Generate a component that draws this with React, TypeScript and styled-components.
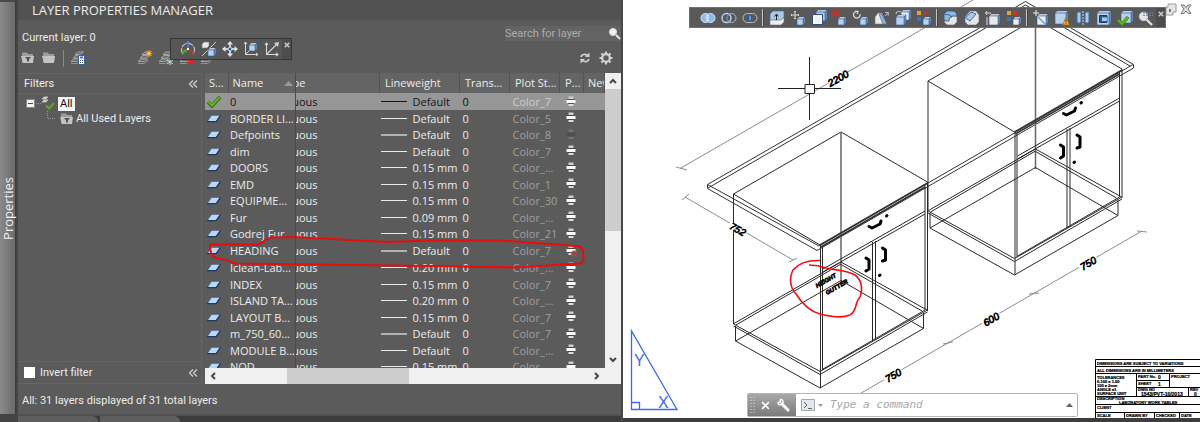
import React from "react";
import styled, { createGlobalStyle, css } from "styled-components";

const Global = createGlobalStyle`
  * { box-sizing: border-box; }
  html, body { margin: 0; padding: 0; }
  body {
    font-family: Roboto, "Open Sans", sans-serif;
    font-size: 11px;
    line-height: 16px;
    color: #ececec;
    background: #5b5b5b;
  }
  button, input { font: inherit; color: inherit; }
`;

const Workspace = styled.div`
  display: grid;
  grid-template-columns: 18px minmax(0, 605fr) minmax(0, 577fr);
  height: 100vh;
  min-height: 300px;
`;

/* ---------- docked side tab ---------- */

const SideRail = styled.aside`
  display: flex;
  flex-direction: column;
  background: #444;
  padding-bottom: 8px;
`;

const SideTab = styled.button`
  flex: 1;
  width: 16px;
  padding: 0;
  border: 0;
  border-top: 2px solid #4a4a4a;
  border-right: 1px solid #3c3c3c;
  background: linear-gradient(90deg, #8a8a8a, #6a6a6a);
  display: flex;
  align-items: center;
  justify-content: center;
  font-family: "Open Sans", sans-serif;
  font-size: 13px;
  line-height: 14px;
  color: #f2f2f2;
  span { writing-mode: vertical-rl; transform: rotate(180deg); }
`;

/* ---------- palette ---------- */

const Palette = styled.section`
  display: flex;
  flex-direction: column;
  min-width: 0;
  min-height: 0;
  background: #5b5b5b;
  border-right: 2px solid #484848;
  position: relative;
`;

const PaletteTitle = styled.h1`
  margin: 0;
  height: 20px;
  padding-left: 6px;
  display: flex;
  align-items: center;
  gap: 4px;
  background: #525252;
  font-family: "Open Sans", sans-serif;
  font-size: 13px;
  line-height: 20px;
  font-weight: 400;
`;

const Grip = styled.span<{ $h: number }>`
  width: 4px;
  height: ${(p) => p.$h}px;
  background-image: radial-gradient(#222 40%, transparent 45%);
  background-size: 2px 2px;
`;

const TopRow = styled.div`
  display: flex;
  justify-content: space-between;
  align-items: flex-start;
  padding: 6px 0 0 4px;
  height: 28px;
`;

const Current = styled.span`
  padding-top: 4px;
`;

const SearchBox = styled.label`
  display: flex;
  align-items: center;
  width: 116px;
  height: 15px;
  background: #636363;
  input {
    flex: 1;
    min-width: 0;
    border: 0;
    padding: 0;
    height: 15px;
    background: transparent;
    outline: 0;
  }
  input::placeholder { color: #adadad; opacity: 1; }
`;

const ToolRow = styled.div`
  display: flex;
  align-items: center;
  height: 20px;
  margin-bottom: 5px;
  padding: 0 7px 0 2px;
  gap: 5px;
`;

const IconButton = styled.button`
  width: 16px;
  height: 16px;
  padding: 0;
  border: 0;
  background: transparent;
  display: flex;
  svg { display: block; }
`;

const Spacer = styled.span<{ $w?: number }>`
  ${(p) => (p.$w ? css`width: ${p.$w}px;` : css`flex: 1;`)}
`;

const ThinRule = styled.span`
  width: 1px;
  height: 17px;
  margin: 0 1px;
  background: #8a8a8a;
`;

const Main = styled.div`
  flex: 1;
  min-height: 0;
  display: grid;
  grid-template-columns: 184px minmax(0, 1fr);
  grid-template-rows: minmax(0, 1fr);
  gap: 3px;
`;

const Filters = styled.div`
  display: flex;
  flex-direction: column;
  border: 1px solid #656565;
  border-left: 0;
  min-height: 0;
`;

const FilterBar = styled.div<{ $foot?: boolean }>`
  display: flex;
  align-items: center;
  justify-content: space-between;
  height: ${(p) => (p.$foot ? 22 : 20)}px;
  padding: 0 3px 0 6px;
  border-${(p) => (p.$foot ? "top" : "bottom")}: 1px solid #656565;
`;

const CheckLabel = styled.label`
  display: flex;
  align-items: center;
  gap: 5px;
  input {
    appearance: none;
    width: 11px;
    height: 11px;
    margin: 0;
    background: #fff;
  }
`;

const Tree = styled.ul`
  flex: 1;
  margin: 0;
  padding: 2px 0 0 7px;
  list-style: none;
`;

const TreeItem = styled.li<{ $child?: boolean }>`
  display: flex;
  align-items: center;
  height: 15px;
  gap: ${(p) => (p.$child ? 3 : 1)}px;
  padding-left: ${(p) => (p.$child ? 19 : 0)}px;
`;

const Picked = styled.span`
  background: #f4f4f4;
  color: #111;
  line-height: 14px;
  padding: 0 2px;
`;

const ListPane = styled.div`
  position: relative;
  display: grid;
  grid-template-columns: minmax(0, 1fr) 16px;
  grid-template-rows: minmax(0, 1fr) 16px;
  min-height: 0;
`;

const TableClip = styled.div`
  overflow: hidden;
  min-height: 0;
`;

const Table = styled.table`
  width: 100%;
  table-layout: fixed;
  border-collapse: collapse;
  font-family: "Open Sans", "Noto Sans", sans-serif;
  th, td {
    padding: 0;
    text-align: left;
    font-weight: 400;
    white-space: nowrap;
    overflow: hidden;
  }
  th {
    height: 20px;
    background: #646464;
    border-right: 1px solid #535353;
    padding-left: 5px;
  }
  th:first-child { padding-left: 4px; }
  th:nth-child(2) { padding-left: 4px; }
  th:nth-child(3), td:nth-child(3) { padding-left: 0; }
  th:nth-child(8) { padding-left: 4px; }
  td:nth-child(2), th:nth-child(2) { border-right: 1px solid #4a4a4a; }
  td:nth-child(2) { padding-left: 2px; }
  td:nth-child(5), td:nth-child(6) { padding-left: 3px; }
`;

const Row = styled.tr<{ $on: boolean }>`
  height: 17px;
  line-height: 15px;
  &:nth-child(even) { height: 16px; }
  &:nth-child(10) { height: 17px; }
  ${(p) => p.$on && css`
    background: #969696;
    color: #141414;
  `}
  td:nth-child(6) { color: ${(p) => (p.$on ? "#cfcfcf" : "#a0a0a0")}; }
`;

const NameHead = styled.span`
  display: flex;
  align-items: center;
  justify-content: space-between;
  padding-right: 2px;
`;

const TailClip = styled.span<{ $w: number }>`
  display: flex;
  justify-content: flex-end;
  width: ${(p) => p.$w}px;
  overflow: hidden;
`;

const Weight = styled.span<{ $thick: boolean }>`
  display: flex;
  align-items: center;
  gap: 6px;
  padding-left: 1px;
  &::before {
    content: "";
    width: 26px;
    border-top: ${(p) => (p.$thick ? 2 : 1)}px solid currentColor;
    opacity: ${(p) => (p.$thick ? 0.6 : 1)};
  }
`;

const CellIcon = styled.span<{ $indent: number }>`
  display: flex;
  padding-left: ${(p) => p.$indent}px;
`;

const VBar = styled.div`
  background: #f0f0f0;
  display: flex;
  flex-direction: column;
`;

const HBar = styled.div`
  grid-column: 1 / -1;
  background: #f0f0f0;
  display: flex;
`;

const ScrollButton = styled.button`
  flex: 0 0 16px;
  height: 16px;
  padding: 0;
  border: 0;
  background: transparent;
  display: flex;
  align-items: center;
  justify-content: center;
`;

const Thumb = styled.span<{ $size: number }>`
  flex: 0 0 ${(p) => p.$size}%;
  background: #cdcdcd;
`;

const Track = styled.span<{ $col?: boolean; $start: number }>`
  flex: 1;
  display: flex;
  flex-direction: ${(p) => (p.$col ? "column" : "row")};
  &::before { content: ""; flex: 0 0 ${(p) => p.$start}%; }
`;

const Status = styled.footer`
  height: 30px;
  padding: 9px 4px 0;
`;

const BottomTabs = styled.div`
  display: flex;
  height: 8px;
  background: #3c3c3c;
  border-top: 2px solid #505050;
  span { background: #5e5e5e; width: 80px; border-radius: 0 8px 0 0; margin-right: 2px; }
`;

const Markup = styled.svg`
  position: absolute;
  left: 0;
  top: 0;
  pointer-events: none;
  overflow: visible;
`;

/* ---------- floating bars ---------- */

const FloatBar = styled.div<{ $nav?: boolean }>`
  position: absolute;
  display: flex;
  align-items: center;
  background: #595959;
  ${(p) => p.$nav
    ? css`left: 152px; top: 38px; height: 22px; border: 1px solid #353535; background: #565656; padding-left: 2px;`
    : css`left: 66px; top: 7px; height: 21px; border: 1px solid #707070; padding-left: 3px;`}
`;

const Tool = styled.button`
  width: 21px;
  height: 20px;
  padding: 0;
  border: 0;
  background: transparent;
  display: flex;
  align-items: center;
  justify-content: center;
`;

const BarRule = styled.span`
  width: 2px;
  height: 17px;
  margin: 0 2px;
  background: #c4c4c4;
  border-right: 1px solid #444;
`;

const BarClose = styled.button`
  align-self: stretch;
  width: 9px;
  padding: 3px 0 0;
  border: 0;
  background: #4d4d4d;
  display: flex;
  justify-content: center;
`;

/* ---------- canvas ---------- */

const Viewport = styled.main`
  position: relative;
  background: #fff;
  border-bottom: 4px solid #3d3d3d;
  min-width: 0;
  min-height: 0;
  overflow: hidden;
`;

const Drawing = styled.svg`
  display: block;
  width: 100%;
  height: 100%;
`;

const WindowButtons = styled.div`
  position: absolute;
  top: 1px;
  right: 6px;
  display: flex;
  gap: 1px;
`;

const CommandLine = styled.div`
  position: absolute;
  left: 124px;
  bottom: 1px;
  width: 331px;
  height: 24px;
  display: flex;
  border: 1px solid #b4b4b4;
  border-radius: 2px;
  background: #fff;
`;

const CommandHandle = styled.div`
  flex: 0 0 48px;
  display: flex;
  align-items: center;
  gap: 6px;
  padding-left: 2px;
  background: linear-gradient(#a8a8a8, #7b7b7b);
`;

const CommandField = styled.label`
  flex: 1;
  min-width: 0;
  display: flex;
  align-items: center;
  gap: 3px;
  padding: 0 4px 0 5px;
  input {
    flex: 1;
    min-width: 0;
    margin-left: 4px;
    border: 0;
    outline: 0;
    padding: 0;
    background: transparent;
    font: italic 11px/16px "DejaVu Sans Mono", monospace;
  }
  input::placeholder { color: #a8a8a8; opacity: 1; }
`;

/* ---------- small icons ---------- */

const Svg = ({ w = 16, h = 16, children }: { w?: number; h?: number; children: React.ReactNode }) => (
  <svg width={w} height={h} viewBox={`0 0 ${w} ${h}`} fill="none" aria-hidden="true">{children}</svg>
);

const Cross = ({ color = "#ccc", size = 6, width = 2 }) => (
  <svg width={size} height={size} viewBox="0 0 8 8" aria-hidden="true">
    <path d="M1 1L7 7M7 1L1 7" stroke={color} strokeWidth={width} />
  </svg>
);

const Chevron = ({ d }: { d: string }) => (
  <Svg w={8} h={8}><path d={d} stroke="#484848" strokeWidth="2" /></Svg>
);

const Collapse = () => (
  <Svg w={10} h={8}><path d="M5 0.500L1.500 4L5 7.500M9 0.500L5.500 4L9 7.500" stroke="#d0d0d0" strokeWidth="1.300" /></Svg>
);

const Folder = ({ filter = false, w = 16 }) => (
  <Svg w={w} h={16}>
    <path d="M2 4V2.500H7L8 4H13V12.500H2Z" fill="#9c9c9c" />
    <path d="M1 6H14L13 13H3Z" fill="#c3c3c3" />
    {filter && <path d="M5 7H11L9 9.500V11.500H7V9.500Z" fill="#555" />}
  </Svg>
);

const Stack = ({ badge }: { badge?: "new" | "frozen" | "delete" | "current" | "states" }) => (
  <Svg>
    <path d="M5 4.500L8 2H13.500L10.500 4.500ZM3 8L6 5.500H12L9 8ZM1 11.500L4 9H10.500L7.500 11.500Z" stroke="#b4b4b4" strokeWidth="0.800" fill="#686868" />
    <path d="M1 13.500H7.500L11.500 10" stroke="#a4a4a4" strokeWidth="0.800" />
    {badge === "new" && <g><path d="M12 0V7M8.500 3.500H15.500M9.500 1L14.500 6M14.500 1L9.500 6" stroke="#f08a24" strokeWidth="1.200" /><circle cx="12" cy="3.500" r="1.500" fill="#ffd24a" /></g>}
    {badge === "frozen" && <path d="M12 8V15M9 10L15 14M15 10L9 14" stroke="#bfe0e0" />}
    {badge === "delete" && <path d="M8 9L15 14M15 9L8 14" stroke="#e22" strokeWidth="2" />}
    {badge === "states" && <g><path d="M8.500 5.500H14.500V14.500H8.500Z" fill="#eef4ff" stroke="#3a5f95" /><path d="M10 7.500H13" stroke="#3a74d0" strokeWidth="2" /><path d="M10 10.500H14M10 12.500H14" stroke="#456" strokeDasharray="1 1" /></g>}
  </Svg>
);

const CheckMark = () => (
  <Svg w={16} h={13}><path d="M2 7L6 11L14 2" stroke="#2f6b07" strokeWidth="3.600" /><path d="M2.500 7L6 10.500L13.500 2.500" stroke="#67b51a" strokeWidth="2" /></Svg>
);

const LayerMark = () => (
  <Svg w={16} h={13}><path d="M5.500 3.500H14L10 9.500H1.500Z" fill="#b9d6f5" /><path d="M1 9.700H10.200L14.500 3.300" stroke="#1d3763" strokeWidth="1.200" /><path d="M1.500 9L5.500 3.300H14" stroke="#42618f" strokeWidth="0.700" /></Svg>
);

const Printer = ({ dim = false, off = false }) => (
  <Svg w={16} h={12}>
    <g opacity={dim ? 0.2 : 1}>
      <path d="M3.500 0.500H8.500V3H3.500Z" fill="#cfcfcf" />
      <path d="M1.500 4H10.500V7H1.500Z" fill={dim ? "#222" : "#fff"} />
      <path d="M2 3.500H10M3 7.500H9" stroke="#444" strokeWidth="0.800" />
      <path d="M3.500 8H8.500V10H3.500Z" fill="#dcdcdc" />
    </g>
    {off && <g stroke="#e0401c"><circle cx="9" cy="8.500" r="2.500" fill="#5b5b5b" /><path d="M7.500 10L10.500 7" /></g>}
  </Svg>
);

const Cube = ({ x, y, s = 7, fill = "#b5d2f0" }: { x: number; y: number; s?: number; fill?: string }) => (
  <g strokeWidth="0.600" stroke="#3d5c86">
    <path d={`M${x} ${y + 2}L${x + 2} ${y}H${x + s + 2}L${x + s} ${y + 2}Z`} fill="#f2f8ff" />
    <path d={`M${x + s} ${y + 2}L${x + s + 2} ${y}V${y + s}L${x + s} ${y + s + 2}Z`} fill="#6d98cd" />
    <path d={`M${x} ${y + 2}H${x + s}V${y + s + 2}H${x}Z`} fill={fill} />
  </g>
);

const toolIcons: { name: string; art: React.ReactNode }[][] = [
  [
    { name: "Union", art: <g stroke="#d7e8fb" fill="#8fb9e8"><circle cx="5.500" cy="8" r="4.500" /><circle cx="10.500" cy="8" r="4.500" /><path d="M8 4.500V11.500" stroke="#fff" /></g> },
    { name: "Subtract", art: <g><circle cx="10.500" cy="8" r="4.500" stroke="#bdbdbd" /><circle cx="5.500" cy="8" r="4.500" stroke="#b9d6f5" strokeWidth="1.400" /><path d="M8 4.300A4.500 4.500 0 0 0 8 11.700" stroke="#3f78c4" /></g> },
    { name: "Intersect", art: <g stroke="#bdbdbd"><path d="M5.500 3.500H10.500A4.500 4.500 0 0 1 10.500 12.500H5.500A4.500 4.500 0 0 1 5.500 3.500Z" /><path d="M8 4.300C10.300 6.500 10.300 9.500 8 11.700C5.700 9.500 5.700 6.500 8 4.300Z" fill="#5d9be6" stroke="#24508c" /></g> },
  ],
  [
    { name: "Extrude faces", art: <g><path d="M1 15V10L4 8H15V12L12 15H1Z" fill="#eee" stroke="#777" strokeWidth="0.600" /><path d="M1 10V4L4 1H15V7L12 10H1Z" fill="#a9c9ec" stroke="#44658f" strokeWidth="0.600" /><path d="M7.500 10V4.500M5.500 6.500L7.500 4L9.500 6.500" stroke="#222" /></g> },
    { name: "Move faces", art: <g><path d="M5 1V9M1 5H9M4 2L5 1L6 2M4 8L5 9L6 8M2 4L1 5L2 6M8 4L9 5L8 6" stroke="#d8d8d8" /><Cube x={7} y={7} s={6} /></g> },
    { name: "Offset faces", art: <g><Cube x={5} y={0} s={9} fill="#a9c9ec" /><path d="M1.500 4.500H11.500V14.500H1.500Z" fill="#eee" stroke="#2b4f82" /><path d="M3 6H10V13H3Z" stroke="#fff" /></g> },
    { name: "Delete faces", art: <g><path d="M0 0L7 6M7 0L0 6" stroke="#e02a12" strokeWidth="1.700" /><Cube x={6} y={7} s={6} /></g> },
    { name: "Rotate faces", art: <g><path d="M4 1.500A3.300 3.300 0 1 0 7 4M2 1L5 1.500L4 4" stroke="#ddd" strokeWidth="1.200" /><Cube x={7} y={7} s={6} /></g> },
    { name: "Taper faces", art: <g><path d="M1 14V7L4 3H8L12 14Z" fill="#e9e9e9" stroke="#777" strokeWidth="0.600" /><path d="M5 4H8L13 14H9Z" fill="#8cb4e4" stroke="#3d5c86" strokeWidth="0.600" /><path d="M11 6L14 3M11 2.500L14.500 2.500L14 6" stroke="#bbb" /></g> },
    { name: "Copy faces", art: <g><Cube x={6} y={0} s={8} fill="#e9f2fc" /><Cube x={1} y={5} s={8} /><path d="M1 4C1 1 4 1 6 2" stroke="#ddd" /></g> },
    { name: "Color faces", art: <g><path d="M1 1H5V5H1Z" fill="#e8a028" /><path d="M8 3H12M10 1V5" stroke="#d8301c" strokeWidth="1.600" /><path d="M1 7H5V11H1Z" fill="#3a72c8" /><Cube x={7} y={7} s={6} /></g> },
  ],
  [
    { name: "Fillet edges", art: <g><path d="M4 6H14V12L11 15H4L1 12Z" fill="#e6e6e6" stroke="#666" strokeWidth="0.600" /><path d="M1 9V4L4 1H9C12 1 14 3 14 6H10C7 6 6 8 6 11L2 11Z" fill="#8fb9e8" stroke="#2d517f" strokeWidth="0.800" /><path d="M2 4.500C6 4 9 6 8 8" stroke="#31588f" /></g> },
    { name: "Chamfer edges", art: <g><path d="M1 7L6 1H12L15 5V12L12 15H4L1 12Z" fill="#e6e6e6" stroke="#666" strokeWidth="0.600" /><path d="M1.500 8L7 2L12 4L6 11Z" fill="#a7c9ef" stroke="#3f6aa3" /></g> },
    { name: "Copy edges", art: <g><Cube x={4} y={4} s={9} fill="#e9e9e9" /><path d="M2 7V15M1 3H6M2 1L0.500 3L2 5" stroke="#e2e2e2" /></g> },
    { name: "Color edges", art: <g><path d="M1 1H5V5H1Z" fill="#e8a028" /><path d="M7 1H11V5H7Z" fill="#d8301c" /><path d="M1 7H5V11H1Z" fill="#3a72c8" /><Cube x={7} y={7} s={6} fill="#eee" /></g> },
  ],
  [
    { name: "Imprint", art: <g><Cube x={4} y={4} s={9} fill="#eee" /><path d="M5 7L13 15" stroke="#5f9be6" strokeWidth="1.400" /><path d="M3 0V6M0 3H6" stroke="#eee" /></g> },
    { name: "Clean", art: <g><Cube x={1} y={1} s={11} /><path d="M12 7L15.500 15H8.500Z" fill="#f0a92a" stroke="#9b6410" strokeWidth="0.600" /><path d="M12 9V12M12 13V14" stroke="#6b3d00" /></g> },
    { name: "Separate", art: <g><path d="M2 3L3 2H6V12L5 13H2ZM10 3L11 2H14V12L13 13H10Z" fill="#a7cbf0" stroke="#3f6aa3" /><path d="M8 1V15" stroke="#ddd" strokeDasharray="2 1" /></g> },
    { name: "Shell", art: <g><Cube x={1} y={1} s={12} /><path d="M3.500 5.500H11V12.500H3.500Z" fill="#31588f" stroke="#1f3c68" /><path d="M6 7.500H11V11H6Z" fill="#a7cbf0" /></g> },
    { name: "Check", art: <g><Cube x={4} y={1} s={10} /><path d="M1 10L5 14L11 7" stroke="#2f7a0a" strokeWidth="3.400" /><path d="M1 10L5 14L11 7" stroke="#63b81e" strokeWidth="2" /></g> },
    { name: "Find", art: <g><circle cx="5.500" cy="6.500" r="4" fill="#dfeaf7" stroke="#ccc" strokeWidth="1.300" /><path d="M8.500 9.500L14 15" stroke="#ddd" strokeWidth="2.400" /><path d="M5 3H15M5 5.500H15" stroke="#4f8ee6" strokeDasharray="2 1" /></g> },
  ],
];

const navIcons: { name: string; art: React.ReactNode }[] = [
  { name: "Orbit", art: <g><path d="M3 13A6.500 6.500 0 1 1 13 13" stroke="#c4c4c4" strokeWidth="1.200" strokeDasharray="6 1" /><path d="M8 8V2" stroke="#3f8cff" strokeWidth="1.300" /><path d="M6 1.500L8 0L10 1.500L8 3Z" fill="#3f8cff" /><path d="M7 9L2 11.500" stroke="#4fae22" strokeWidth="2.500" /><path d="M9 9L14 12" stroke="#d8301c" strokeWidth="2" /><path d="M7 7H9V9H7Z" fill="#fff" /></g> },
  { name: "Visual style", art: <g><path d="M1 15L15 1" stroke="#ccc" /><path d="M1 3L3 1H8V5L6 7H1Z" fill="#e8e8e8" stroke="#777" strokeWidth="0.600" /><Cube x={7} y={7} s={6} /></g> },
  { name: "Pan", art: <g><path d="M8 0L11 3.500H5ZM8 16L11 12.500H5ZM0 8L3.500 5V11ZM16 8L12.500 5V11Z" fill="#e4e4e4" /><path d="M8 3V6M8 10V13M3 8H6M10 8H13" stroke="#d0d0d0" strokeWidth="2" /><path d="M6.500 6.500H9.500V9.500H6.500Z" fill="#355f9b" stroke="#9cc2ee" /></g> },
  { name: "UCS", art: <g><path d="M2.500 1V13.500H15M2.500 13.500L6 10M1 3L2.500 1L4 3M13 12L15 13.500L13 15" stroke="#d6d6d6" /><Cube x={6} y={2} s={6} /></g> },
  { name: "UCS axis", art: <g><path d="M2.500 2V13.500H14M2.500 13.500L13 3M1 4L2.500 2L4 4M12 12L14 13.500L12 15" stroke="#d6d6d6" strokeWidth="1.100" /><path d="M10 2L15 1L14 6Z" fill="#d6d6d6" /></g> },
];

/* ---------- layer data ---------- */

type Layer = [name: string, weight: string, style: string];

const layers: Layer[] = [
  ["0", "Default", "Color_7"],
  ["BORDER LI...", "Default", "Color_5"],
  ["Defpoints", "Default", "Color_8"],
  ["dim", "Default", "Color_7"],
  ["DOORS", "0.15 mm", "Color_..."],
  ["EMD", "0.15 mm", "Color_1"],
  ["EQUIPME...", "0.15 mm", "Color_30"],
  ["Fur", "0.09 mm", "Color_..."],
  ["Godrej Fur...", "0.15 mm", "Color_21"],
  ["HEADING", "Default", "Color_7"],
  ["Iclean-Lab...", "0.20 mm", "Color_..."],
  ["INDEX", "0.15 mm", "Color_7"],
  ["ISLAND TA...", "0.20 mm", "Color_..."],
  ["LAYOUT B...", "0.15 mm", "Color_7"],
  ["m_750_60...", "Default", "Color_7"],
  ["MODULE B...", "Default", "Color_..."],
  ["NOD", "0.15 mm", "Color_..."],
];

const columnWidths = [23, 67, undefined, 80, 50, 50, 24, 21];

/* ---------- drawing parts ---------- */

const Cabinet = () => (
  <g stroke="#2a2a2a" strokeWidth="1" fill="none">
    <path d="M733.500 194L841 132L927.500 182M733.500 194L820 245M733.500 194V324" />
    <path d="M841 132V282" stroke="#666" strokeWidth="1.500" />
    <path d="M820.500 245V388M822.500 247V370M925 184V310M927.500 182V311" />
    <path d="M820 245L927.500 183M821 247L925 187" stroke="#333" strokeWidth="1.500" />
    <path d="M823 269L925 211M823 272L925 214M872.500 242V341M875.500 241V340" />
    <path d="M734 323.500L841 262M736 325L841 264M841 262L927 310M841 264.500L922 311" />
    <path d="M733.500 324L820 371.500L927.500 310M733.500 326L820 374.500L927.500 312M823 369L925 310" />
    <path d="M735.500 326V341L820 388L923.500 328.500V313" />
    <path d="M735.500 341L841 280.500L923.500 328.500" />
    <g stroke="#000" strokeWidth="3" strokeLinecap="round" strokeLinejoin="round">
      <path d="M869 226.500L872 228L880 224L881 221M886.500 216L887 215.500" />
      <path d="M866 258L869 260V269L866 271M882.500 248L885.500 250V260L882.500 261M879.500 275.500L880 275" />
    </g>
  </g>
);

const Dim = ({ x, y, angle = -30, children }: { x: number; y: number; angle?: number; children: string }) => (
  <g transform={`translate(${x} ${y}) rotate(${angle})`}>
    <rect x="-10" y="-3" width="20" height="6" fill="#fff" />
    <text textAnchor="middle" y="4" fontSize="10" fontStyle="italic" fontFamily="Liberation Sans, sans-serif" fill="#000" stroke="#000" strokeWidth="0.700">{children}</text>
  </g>
);

const TitleBlock = () => (
  <g>
    <path d="M1095.500 359.500H1200M1095.500 359.500V418M1095.500 366.500H1200M1095.500 373.500H1200M1136.500 373.500V396.500M1136.500 380.500H1169M1169.500 373.500V387.500M1136.500 387.500H1200M1188.500 387.500V396.500M1095.500 396.500H1200M1095.500 404.500H1200M1095.500 412.500H1200M1124.500 412.500V418M1154.500 412.500V418M1179.500 412.500V418" stroke="#000" />
    <g fontFamily="Liberation Sans, sans-serif" fontSize="4" fontWeight="700" fill="#000" stroke="#000" strokeWidth="0.200">
      <text x="1097" y="364.500">DIMENSIONS ARE SUBJECT TO VARIATIONS</text>
      <text x="1097" y="371.500">ALL DIMENSIONS ARE IN MILLIMETERS</text>
      <text x="1097" y="378.500">TOLERANCES</text>
      <text x="1097" y="383">0-100 ± 1.00</text>
      <text x="1097" y="387">100 ± 2mm</text>
      <text x="1097" y="391">ANGLE ±1</text>
      <text x="1097" y="395">SURFACE UNIT</text>
      <text x="1138" y="378">PART No.</text><text x="1158" y="379" fontSize="5">0</text>
      <text x="1171" y="378">PROJECT</text>
      <text x="1138" y="385">SHEET</text><text x="1158" y="386" fontSize="5">1</text>
      <text x="1138" y="391">DWG NO</text><text x="1190" y="391">REV</text>
      <text x="1141" y="395.500" fontSize="5">1543/PVT-10/2013</text><text x="1194" y="396" fontSize="5">0</text>
      <text x="1097" y="400">DESCRIPTION</text>
      <text x="1119" y="404">LABORATORY WORK TABLES</text>
      <text x="1097" y="409">CLIENT</text>
      <text x="1097" y="417">SCALE</text><text x="1126" y="417">DRAWN BY</text><text x="1156" y="417">CHECKED</text><text x="1181" y="417">DATE</text>
    </g>
  </g>
);

const Scene = () => (
  <Drawing viewBox="623 0 577 418" preserveAspectRatio="xMinYMin meet" fill="none" role="img" aria-label="Isometric view of laboratory work tables">
    <g stroke="#8c8c8c">
      <path d="M680 168.500L973 0M676 167L687 170M685 197L793 260M682 200L689 194M789 262L797 258" />
      <path d="M837 407L1142 231M943 344L953 342M1029 294L1039 293M1137 231L1147 232" />
    </g>
    <g stroke="#333">
      <path d="M1025.500 1.500L707.500 184.500V188.500L817 250.500L1133.500 68V64.500L1025.500 1.500" />
      <path d="M708 188L1025.500 5L1130 66M707.500 184.500L819 246L1133 64.500" />
    </g>
    <Cabinet />
    <g transform="translate(194.500 -113)"><Cabinet /></g>
    <Dim x={838} y={78}>2200</Dim>
    <Dim x={738} y={229} angle={30}>752</Dim>
    <Dim x={893} y={375}>750</Dim>
    <Dim x={991} y={319}>600</Dim>
    <Dim x={1088} y={263}>750</Dim>
    <g fontFamily="Liberation Sans, sans-serif" fontSize="6" fontWeight="700" fontStyle="italic" fill="#000" stroke="#000" strokeWidth="0.600">
      <text transform="translate(817 288) rotate(-30)">HEIGHT</text>
      <text transform="translate(827 295) rotate(-30)">GUTTER</text>
    </g>
    <path d="M820 260.500C806 260 798 264 793 270C789 278 790 288 796 294C803 305 812 312 820 314C832 317 843 318 850 315C858 310 854 303 860 297C863 290 862 280 855 275C847 270 833 270 826 268C818 265 815 265 809 265" stroke="#f81010" strokeWidth="1.600" />
    <g stroke="#222">
      <path d="M778 88.500H841M809.500 57V120" />
      <path d="M805 84.500H814.500V93.500H805Z" fill="#fff" />
    </g>
    <g stroke="#3c68f5" strokeWidth="1.300">
      <path d="M631.500 331V409.500H677ZM631.500 402.500H639.500V409.500" />
    </g>
    <g fontFamily="Liberation Sans, sans-serif" fontSize="16" fill="#3c68f5">
      <text x="634" y="366">Y</text>
      <text x="658" y="408">X</text>
    </g>
    <TitleBlock />
  </Drawing>
);

/* ---------- page ---------- */

export default function App() {
  return (
    <>
      <Global />
      <Workspace>
        <SideRail><SideTab><span>Properties</span></SideTab></SideRail>

        <Palette>
          <PaletteTitle><Grip $h={10} />LAYER PROPERTIES MANAGER</PaletteTitle>
          <TopRow>
            <Current>Current layer: 0</Current>
            <SearchBox>
              <input type="text" aria-label="Search for layer" placeholder="Search for layer" />
              <Svg w={13} h={13}><circle cx="5" cy="5" r="3.500" fill="#eaf2ff" stroke="#ddd" /><path d="M8 8L12 12" stroke="#e4e4e4" strokeWidth="2" /></Svg>
            </SearchBox>
          </TopRow>
          <ToolRow>
            <IconButton aria-label="New property filter"><Folder filter /></IconButton>
            <IconButton aria-label="New group filter"><Folder /></IconButton>
            <ThinRule />
            <IconButton aria-label="Layer states"><Stack badge="states" /></IconButton>
            <Spacer $w={41} />
            <IconButton aria-label="New layer"><Stack badge="new" /></IconButton>
            <IconButton aria-label="New frozen layer"><Stack badge="frozen" /></IconButton>
            <IconButton aria-label="Delete layer"><Stack badge="delete" /></IconButton>
            <IconButton aria-label="Set current"><Stack /></IconButton>
            <Spacer />
            <IconButton aria-label="Refresh">
              <Svg><path d="M4 7C4.500 4.500 8 3.500 10.500 5.500M12 9C11.500 11.500 8 12.500 5.500 10.500" stroke="#d2d2d2" strokeWidth="1.600" /><path d="M12.500 2.500V7H8ZM3.500 13.500V9H8Z" fill="#d2d2d2" /></Svg>
            </IconButton>
            <IconButton aria-label="Settings">
              <Svg><circle cx="8" cy="8" r="3.800" stroke="#d2d2d2" strokeWidth="2.200" /><path d="M8 1.500V4M8 12V14.500M1.500 8H4M12 8H14.500M3.400 3.400L5.200 5.200M10.800 10.800L12.600 12.600M12.600 3.400L10.800 5.200M5.200 10.800L3.400 12.600" stroke="#d2d2d2" strokeWidth="2" /></Svg>
            </IconButton>
          </ToolRow>

          <Main>
            <Filters>
              <FilterBar>Filters<Collapse /></FilterBar>
              <Tree>
                <TreeItem>
                  <Svg w={32} h={15}>
                    <path d="M1.500 3.500H9.500V11.500H1.500Z" fill="#f2f2f2" stroke="#888" /><path d="M3 7.500H8" stroke="#2c4b8c" />
                    <path d="M11 7.500H16" stroke="#999" strokeDasharray="1 1" />
                    <path d="M17 3L19 1H23L21 3ZM17 6L19 4H23L21 6Z" fill="#d8d8d8" stroke="#bbb" />
                    <path d="M21 9.500L24 12.500L29 7" stroke="#4fae22" strokeWidth="2" />
                  </Svg>
                  <Picked>All</Picked>
                </TreeItem>
                <TreeItem $child>
                  <Svg w={12} h={15}><path d="M3.500 0V7.500H11" stroke="#999" strokeDasharray="1 1" /></Svg>
                  <Folder filter w={14} />
                  All Used Layers
                </TreeItem>
              </Tree>
              <FilterBar $foot>
                <CheckLabel><input type="checkbox" />Invert filter</CheckLabel>
                <Collapse />
              </FilterBar>
            </Filters>

            <ListPane>
              <TableClip>
                <Table>
                  <colgroup>{columnWidths.map((w, i) => <col key={i} width={w} />)}</colgroup>
                  <thead>
                    <tr>
                      <th>S...</th>
                      <th><NameHead>Name<Svg w={9} h={5}><path d="M0 5L4.500 0L9 5Z" fill="#999" /></Svg></NameHead></th>
                      <th><TailClip $w={10}>pe</TailClip></th>
                      <th>Lineweight</th>
                      <th>Trans...</th>
                      <th>Plot St...</th>
                      <th>P...</th>
                      <th>New</th>
                    </tr>
                  </thead>
                  <tbody>
                    {layers.map(([name, weight, style], i) => (
                      <Row key={name} $on={i === 0}>
                        <td><CellIcon $indent={1}>{i === 0 ? <CheckMark /> : <LayerMark />}</CellIcon></td>
                        <td>{name}</td>
                        <td><TailClip $w={22}>uous</TailClip></td>
                        <td><Weight $thick={[2, 9, 14].includes(i)}>{weight}</Weight></td>
                        <td>0</td>
                        <td>{style}</td>
                        <td><CellIcon $indent={5}><Printer dim={i === 2} off={name === "HEADING"} /></CellIcon></td>
                        <td />
                      </Row>
                    ))}
                  </tbody>
                </Table>
              </TableClip>
              <VBar>
                <ScrollButton aria-label="Scroll up"><Chevron d="M1 6L4 3L7 6" /></ScrollButton>
                <Track $col $start={0}><Thumb $size={54} /></Track>
                <ScrollButton aria-label="Scroll down"><Chevron d="M1 2L4 5L7 2" /></ScrollButton>
              </VBar>
              <HBar>
                <ScrollButton aria-label="Scroll left"><Chevron d="M6 1L3 4L6 7" /></ScrollButton>
                <Track $start={18}><Thumb $size={33} /></Track>
                <ScrollButton aria-label="Scroll right"><Chevron d="M2 1L5 4L2 7" /></ScrollButton>
                <Spacer $w={16} />
              </HBar>
              <Markup width="400" height="300" viewBox="205 73 400 300" fill="none" aria-hidden="true">
                <path d="M254 244.500H210C210 252 212 257 216 258L227 260L235 263.500L433 266L517 267.500L560 264.500L581 263.500C585 260 584 250 580 246.500L550 244L500 240.500H430L387 242L293 237L272 237.500C264 239 262 243 258 245L252 245" stroke="#e80c0c" strokeWidth="2" strokeLinejoin="round" />
              </Markup>
            </ListPane>
          </Main>

          <Status>All: 31 layers displayed of 31 total layers</Status>
          <BottomTabs><span /><span /></BottomTabs>

          <FloatBar $nav>
            <Grip $h={14} />
            {navIcons.map((t) => <Tool key={t.name} aria-label={t.name}><Svg>{t.art}</Svg></Tool>)}
            <BarClose aria-label="Close toolbar"><Cross /></BarClose>
          </FloatBar>
        </Palette>

        <Viewport>
          <Scene />
          <WindowButtons>
            <IconButton aria-label="Restore"><Svg><path d="M7 3H15V11H12V14H5V6H7Z" fill="#e6e6e6" stroke="#9a9a9a" /><path d="M8 8H10V11H8Z" fill="#777" /></Svg></IconButton>
            <IconButton aria-label="Close"><Svg><path d="M3 4H6L8 6.500L10 4H13L10 8L13 12.500H10L8 10L6 12.500H3L6 8Z" fill="#ddd" stroke="#777" /></Svg></IconButton>
          </WindowButtons>
          <FloatBar>
            <Grip $h={13} />
            {toolIcons.map((group, g) => (
              <React.Fragment key={g}>
                {g > 0 && <BarRule />}
                {group.map((t) => <Tool key={t.name} aria-label={t.name}><Svg>{t.art}</Svg></Tool>)}
              </React.Fragment>
            ))}
            <BarClose aria-label="Close toolbar"><Cross /></BarClose>
          </FloatBar>
          <CommandLine>
            <CommandHandle>
              <Svg w={5} h={16}><path d="M1 0V16M4 0V16" stroke="#ddd" strokeDasharray="1 2" /></Svg>
              <Cross color="#fff" size={9} width={1.5} />
              <Svg w={14} h={14}><path d="M6 6L12 12" stroke="#fff" strokeWidth="3" strokeLinecap="round" /><path d="M4 1.500L4.500 4L2 4.500M4 1.500C7 1 8 4 6 6C4 7.500 1.500 7 2 4.500" stroke="#fff" strokeWidth="1.500" /></Svg>
            </CommandHandle>
            <CommandField>
              <Svg w={14} h={12}><path d="M0.500 0.500H13.500V11.500H0.500Z" fill="#e4e8ee" stroke="#a8a8a8" /><path d="M3 3L6 6L3 9M7 9.500H11" stroke="#666" /></Svg>
              <Svg w={5} h={3}><path d="M0 0H5L2.500 3Z" fill="#999" /></Svg>
              <input type="text" aria-label="Command" placeholder="Type a command" />
              <Svg w={7} h={4}><path d="M0 4L3.500 0L7 4Z" fill="#666" /></Svg>
            </CommandField>
          </CommandLine>
        </Viewport>
      </Workspace>
    </>
  );
}
